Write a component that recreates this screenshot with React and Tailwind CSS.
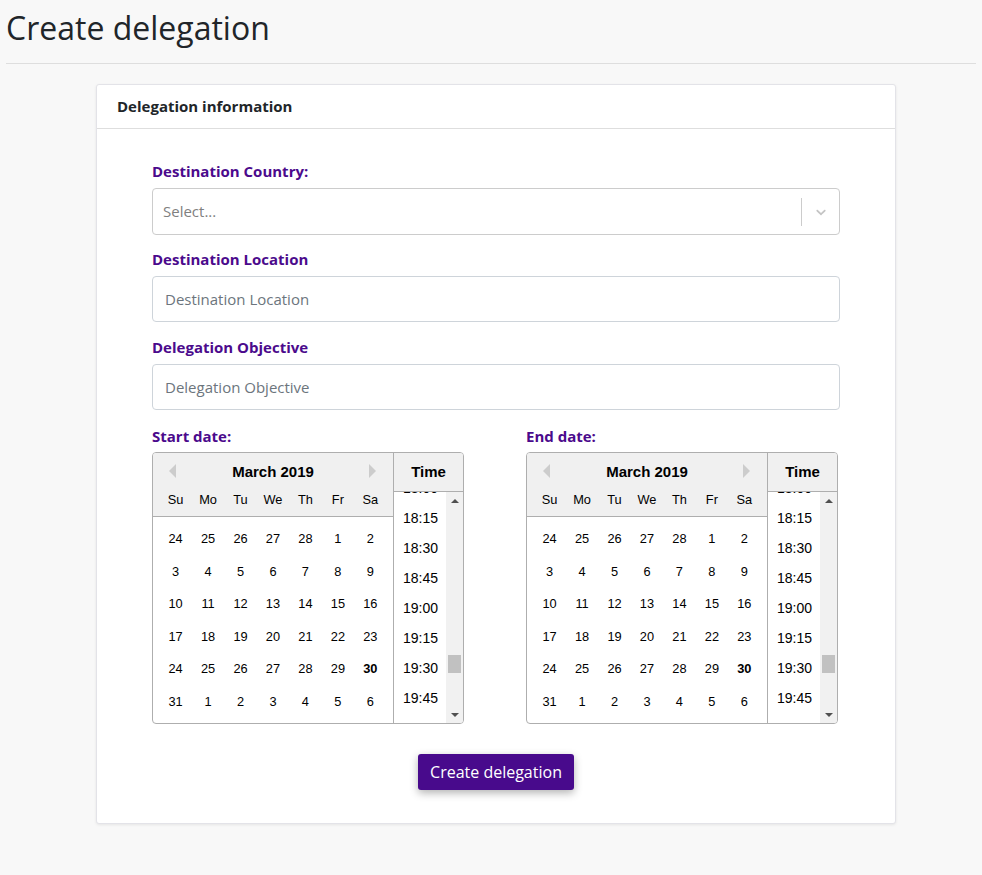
import React from "react";

const weeks = [
  [24, 25, 26, 27, 28, 1, 2],
  [3, 4, 5, 6, 7, 8, 9],
  [10, 11, 12, 13, 14, 15, 16],
  [17, 18, 19, 20, 21, 22, 23],
  [24, 25, 26, 27, 28, 29, 30],
  [31, 1, 2, 3, 4, 5, 6],
];
const dayNames = ["Su", "Mo", "Tu", "We", "Th", "Fr", "Sa"];
const times = ["18:00", "18:15", "18:30", "18:45", "19:00", "19:15", "19:30", "19:45", "20:00"];

const DatePicker = () => {
  return (
    <div className="flex w-[312px] h-[272px] border border-[#aeaeae] rounded-[4px] bg-white overflow-hidden font-['Liberation_Sans',Arial,sans-serif] text-black">
      {/* Month */}
      <div className="w-[240px] flex flex-col">
        <div className="bg-[#f0f0f0] border-b border-[#aeaeae] pt-[9px] h-[64px]">
          <div className="relative h-[20px] flex items-center justify-center text-[15px] font-bold leading-[20px]">
            <span className="absolute left-[16px] top-[2px] w-0 h-0 border-y-[7px] border-y-transparent border-r-[7px] border-r-[#ccc]" />
            March 2019
            <span className="absolute right-[17px] top-[2px] w-0 h-0 border-y-[7px] border-y-transparent border-l-[7px] border-l-[#ccc]" />
          </div>
          <div className="flex px-[6.4px] mt-[1px]">
            {dayNames.map((d) => (
              <div key={d} className="w-[27.2px] mx-[2.66px] leading-[27.2px] my-[2.66px] text-center text-[12.8px]">
                {d}
              </div>
            ))}
          </div>
        </div>
        <div className="px-[6.4px] pt-[5.4px]">
          {weeks.map((week, wi) => (
            <div key={wi} className="flex">
              {week.map((day, di) => (
                <div
                  key={di}
                  className={`w-[27.2px] mx-[2.66px] my-[2.66px] leading-[27.2px] text-center text-[12.8px] ${wi === 4 && di === 6 ? "font-bold" : ""}`}
                >
                  {day}
                </div>
              ))}
            </div>
          ))}
        </div>
      </div>
      {/* Time */}
      <div className="flex-1 flex flex-col border-l border-[#aeaeae]">
        <div className="h-[39px] bg-[#f0f0f0] border-b border-[#aeaeae] flex items-center justify-center text-[15px] font-bold">
          Time
        </div>
        <div className="flex-1 flex overflow-hidden">
          <div className="flex-1 overflow-hidden">
            <div className="-mt-[19px]">
              {times.map((t) => (
                <div key={t} className="h-[30px] flex items-center justify-center text-[14px] pl-[1px]">
                  {t}
                </div>
              ))}
            </div>
          </div>
          <div className="w-[17px] bg-[#f1f1f1] flex flex-col">
            <div className="h-[17px] flex items-center justify-center">
              <span className="w-0 h-0 border-x-[4px] border-x-transparent border-b-[4px] border-b-[#505050]" />
            </div>
            <div className="flex-1 px-[2px]">
              <div className="mt-[146px] h-[18px] bg-[#c1c1c1]" />
            </div>
            <div className="h-[17px] flex items-center justify-center">
              <span className="w-0 h-0 border-x-[4px] border-x-transparent border-t-[4px] border-t-[#505050]" />
            </div>
          </div>
        </div>
      </div>
    </div>
  );
};

const Label = ({ children, className = "" }) => (
  <label className={`block text-[15px] font-bold leading-[22px] text-[#4b0a8c] ${className}`}>{children}</label>
);

export default function App() {
  return (
    <div className="min-h-[875px] bg-[#f8f8f8] font-['Open_Sans','Noto_Sans',sans-serif] text-[#212529] pb-[50px]">
      <h1 className="pl-[6px] pt-[6px] text-[32px] leading-[44px] font-normal">Create delegation</h1>
      <div className="mx-[6px] mt-[13px] border-t border-[#dedede]" />

      <div className="ml-[96px] mt-[20px] w-[800px] bg-white border border-[#e3e3e8] rounded-[3px] shadow-[0_1px_3px_rgba(0,0,0,0.08)]">
        <div className="h-[44px] px-[20px] flex items-center border-b border-[#dedede] text-[15px] font-bold">
          Delegation information
        </div>

        <div className="px-[55px] pt-[31px] pb-[33px]">
          <Label className="mb-[6px]">Destination Country:</Label>
          <div className="h-[47px] border border-[#cccccc] rounded-[4px] flex items-center">
            <span className="flex-1 pl-[10px] text-[15px] text-[#808080]">Select...</span>
            <span className="w-px h-[28px] bg-[#cccccc]" />
            <span className="w-[37px] flex items-center justify-center">
              <svg width="16" height="16" viewBox="0 0 20 20" fill="#c4c4c4">
                <path d="M4.516 7.548c0.436-0.446 1.043-0.481 1.576 0l3.908 3.747 3.908-3.747c0.533-0.481 1.141-0.446 1.574 0 0.436 0.445 0.408 1.197 0 1.615-0.406 0.418-4.695 4.502-4.695 4.502-0.217 0.223-0.502 0.335-0.787 0.335s-0.57-0.112-0.789-0.335c0 0-4.287-4.084-4.695-4.502s-0.436-1.17 0-1.615z" />
              </svg>
            </span>
          </div>

          <Label className="mt-[13px] mb-[6px]">Destination Location</Label>
          <input
            type="text"
            placeholder="Destination Location"
            className="w-full h-[46px] border border-[#ced4da] rounded-[4px] px-[12px] text-[15px] placeholder:text-[#6c757d] outline-none"
          />

          <Label className="mt-[14px] mb-[6px]">Delegation Objective</Label>
          <input
            type="text"
            placeholder="Delegation Objective"
            className="w-full h-[46px] border border-[#ced4da] rounded-[4px] px-[12px] text-[15px] placeholder:text-[#6c757d] outline-none"
          />

          <div className="mt-[15px] flex gap-[62px]">
            <div>
              <Label className="mb-[5px]">Start date:</Label>
              <DatePicker />
            </div>
            <div>
              <Label className="mb-[5px]">End date:</Label>
              <DatePicker />
            </div>
          </div>

          <div className="mt-[30px] flex justify-center">
            <button className="h-[36px] px-[12px] rounded-[3px] bg-[#480a8c] text-white text-[16px] shadow-[0_3px_8px_rgba(0,0,0,0.3)]">
              Create delegation
            </button>
          </div>
        </div>
      </div>
    </div>
  );
}
